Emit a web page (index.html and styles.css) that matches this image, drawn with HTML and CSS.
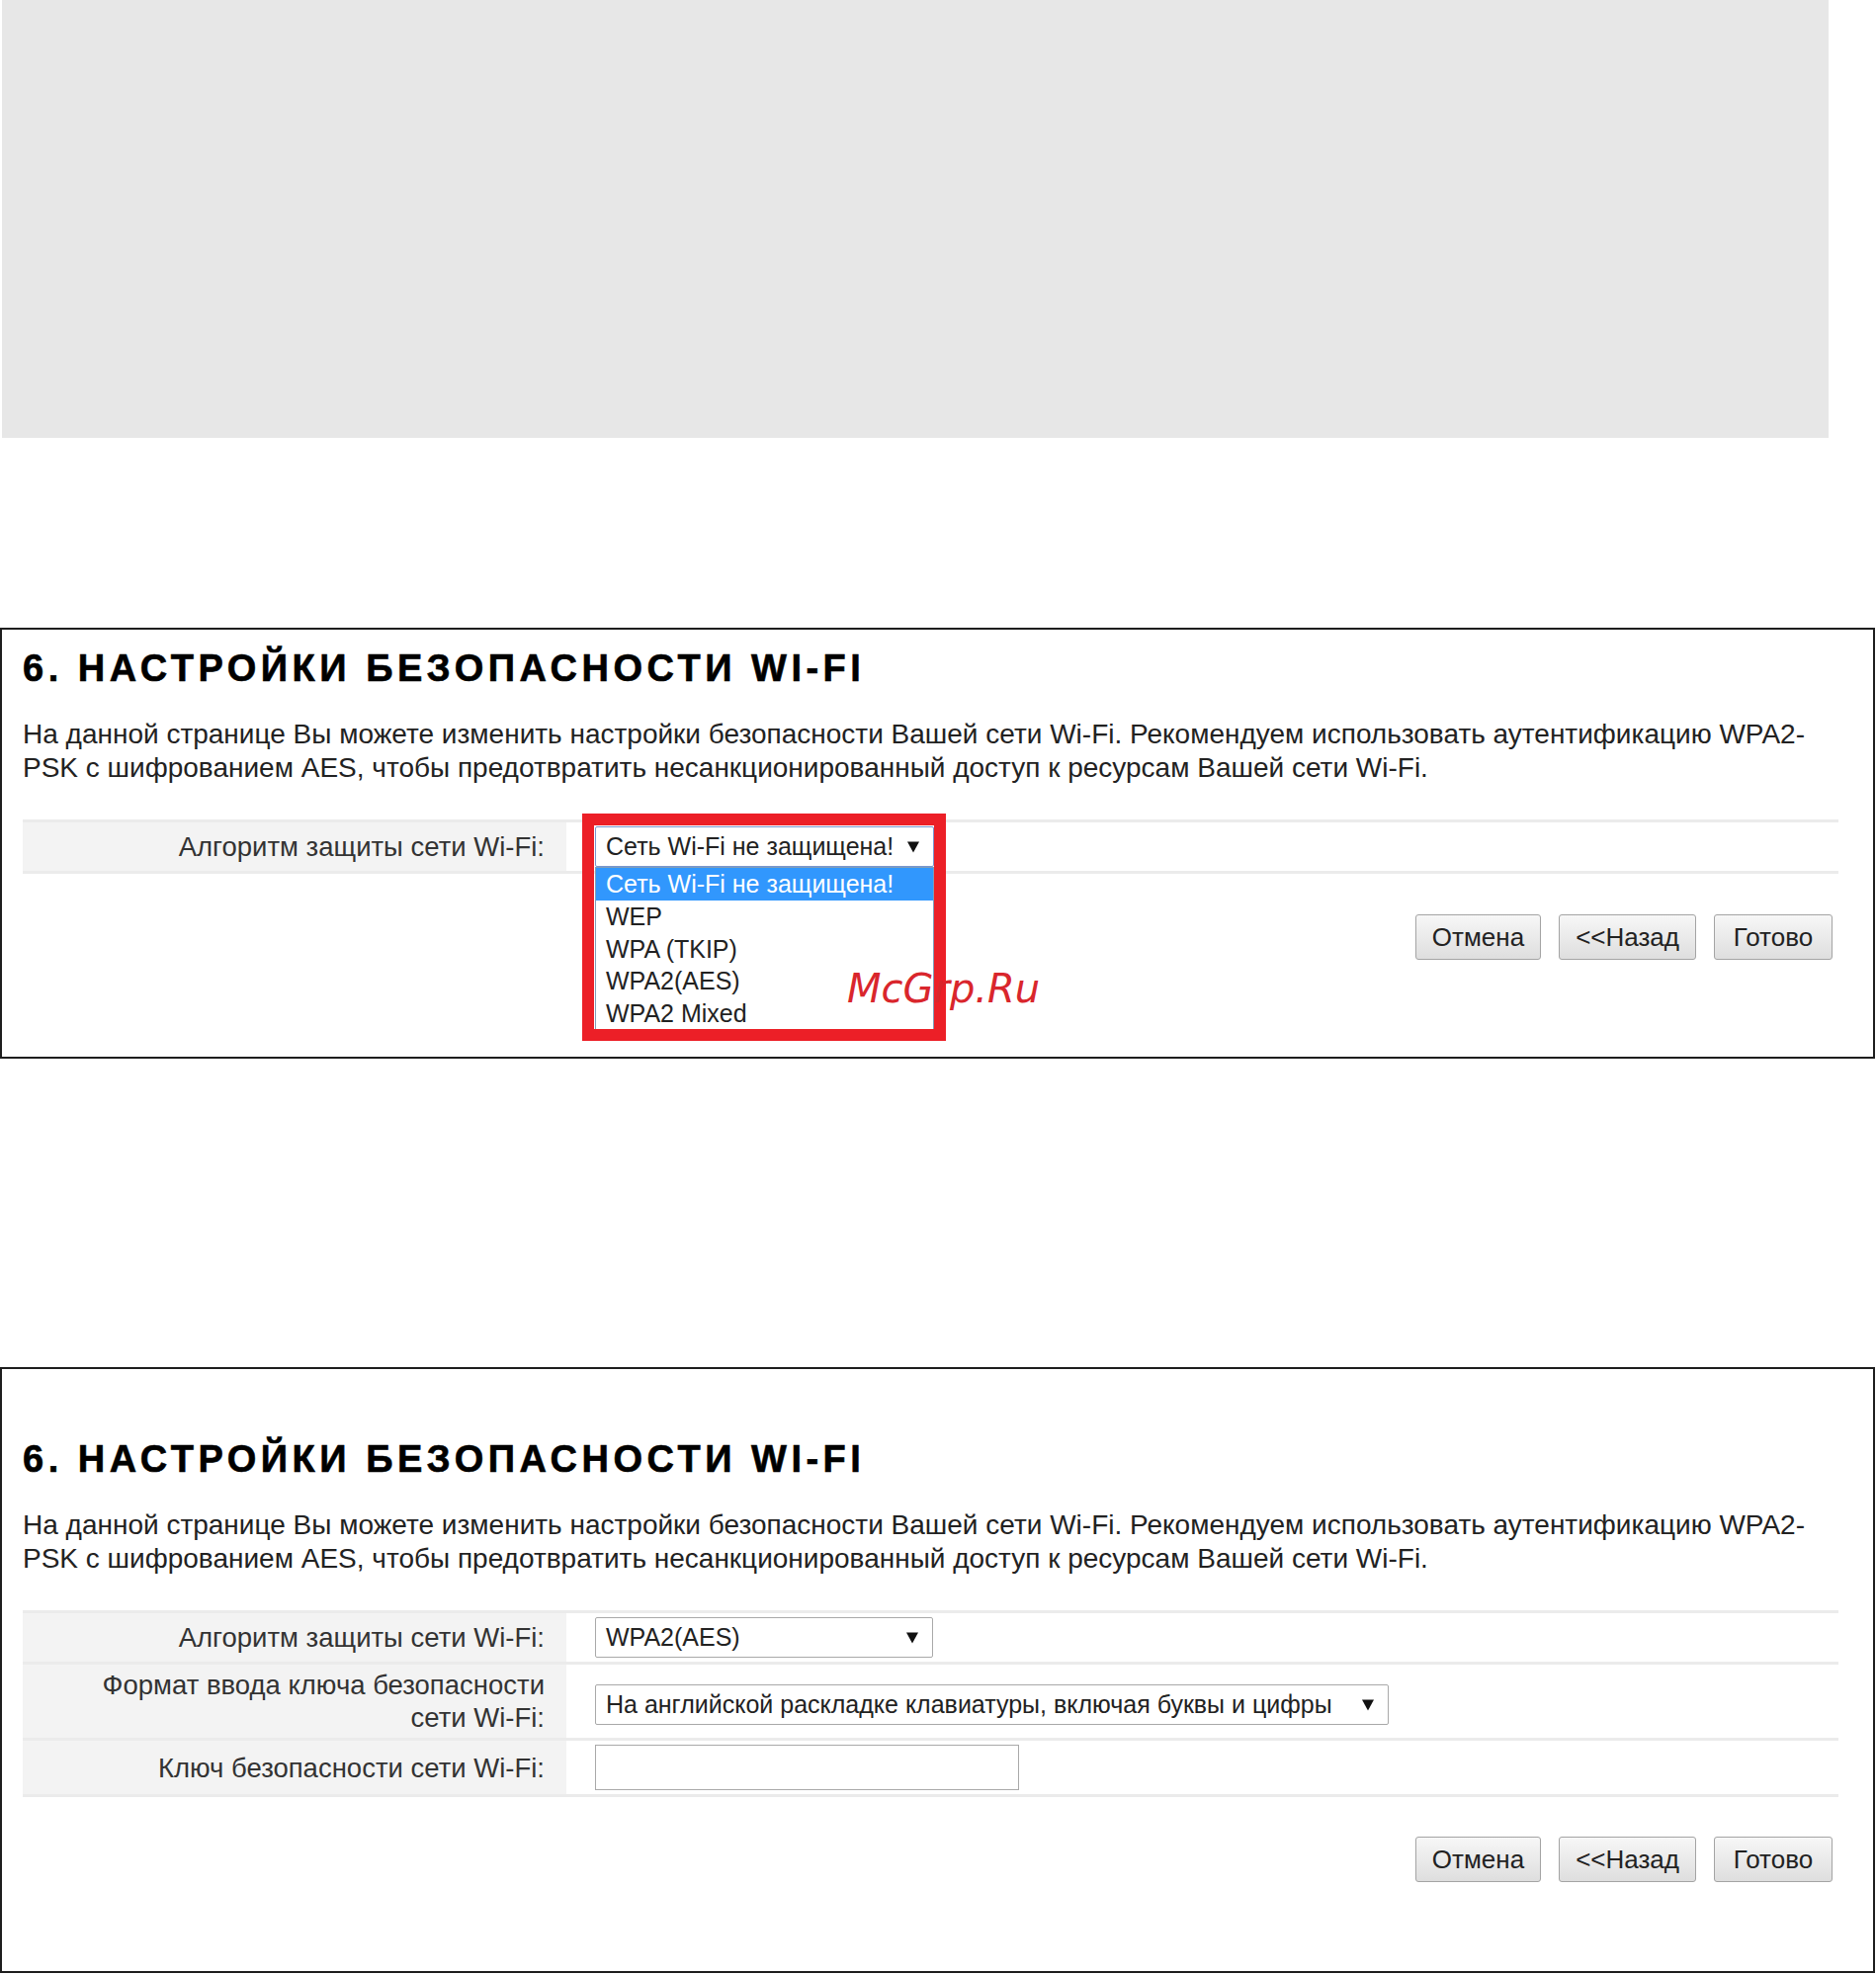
FILE: index.html
```html
<!DOCTYPE html>
<html lang="ru">
<head>
	<meta charset="UTF-8">
	<title>Настройки безопасности Wi-Fi</title>
	<link rel="stylesheet" href="styles.css">
</head>
<body>
	<div class="banner"></div>

	<div class="panel panel-open">
		<h2 class="panel-title">6. НАСТРОЙКИ БЕЗОПАСНОСТИ WI-FI</h2>
		<p class="panel-text">На данной странице Вы можете изменить настройки безопасности Вашей сети Wi-Fi. Рекомендуем использовать аутентификацию WPA2-PSK с шифрованием AES, чтобы предотвратить несанкционированный доступ к ресурсам Вашей сети Wi-Fi.</p>
		<div class="rows">
			<div class="row">
				<div class="label">Алгоритм защиты сети Wi-Fi:</div>
				<div class="value">
					<div class="dropdown">
						<div class="select select-focus select-short">
							<span>Сеть Wi-Fi не защищена!</span>
							<svg class="arrow" viewBox="0 0 12 12"><polygon points="0,1 12,1 6,12"/></svg>
						</div>
						<ul class="options">
							<li class="selected">Сеть Wi-Fi не защищена!</li>
							<li>WEP</li>
							<li>WPA (TKIP)</li>
							<li>WPA2(AES)</li>
							<li>WPA2 Mixed</li>
						</ul>
						<div class="frame"></div>
					</div>
				</div>
			</div>
		</div>
		<div class="buttons">
			<span class="btn">Отмена</span>
			<span class="btn">&lt;&lt;Назад</span>
			<span class="btn">Готово</span>
		</div>
		<div class="watermark">McGrp.Ru</div>
	</div>

	<div class="panel panel-filled">
		<h2 class="panel-title">6. НАСТРОЙКИ БЕЗОПАСНОСТИ WI-FI</h2>
		<p class="panel-text">На данной странице Вы можете изменить настройки безопасности Вашей сети Wi-Fi. Рекомендуем использовать аутентификацию WPA2-PSK с шифрованием AES, чтобы предотвратить несанкционированный доступ к ресурсам Вашей сети Wi-Fi.</p>
		<div class="rows">
			<div class="row">
				<div class="label">Алгоритм защиты сети Wi-Fi:</div>
				<div class="value">
					<div class="select select-short">
						<span>WPA2(AES)</span>
						<svg class="arrow" viewBox="0 0 12 12"><polygon points="0,1 12,1 6,12"/></svg>
					</div>
				</div>
			</div>
			<div class="row">
				<div class="label">Формат ввода ключа безопасности<br>сети Wi-Fi:</div>
				<div class="value">
					<div class="select select-long">
						<span>На английской раскладке клавиатуры, включая буквы и цифры</span>
						<svg class="arrow" viewBox="0 0 12 12"><polygon points="0,1 12,1 6,12"/></svg>
					</div>
				</div>
			</div>
			<div class="row">
				<div class="label">Ключ безопасности сети Wi-Fi:</div>
				<div class="value">
					<div class="input"></div>
				</div>
			</div>
		</div>
		<div class="buttons">
			<span class="btn">Отмена</span>
			<span class="btn">&lt;&lt;Назад</span>
			<span class="btn">Готово</span>
		</div>
	</div>
</body>
</html>
```

FILE: styles.css
```css
*{
	margin: 0;
	padding: 0;
	box-sizing: border-box;
}
body{
	font-family: "Liberation Sans", Arial, sans-serif;
	color: #222;
	background: #fff;
}
ul{
	list-style: none;
}
.banner{
	width: 1848px;
	height: 443px;
	margin-left: 2px;
	background: #e7e7e7;
}

/* panels */
.panel{
	position: relative;
	width: 1897px;
	border: 2px solid #1e1e1e;
	padding: 16px 35px 98px 21px;
}
.panel-open{
	margin-top: 192px;
}
.panel-filled{
	margin-top: 312px;
	padding-top: 68px;
	padding-bottom: 90px;
}
.panel-title{
	font-size: 38px;
	line-height: 46px;
	font-weight: bold;
	letter-spacing: 4.5px;
	color: #000;
	-webkit-text-stroke: 0.6px #000;
}
.panel-text{
	margin-top: 27px;
	font-size: 28px;
	line-height: 34px;
	color: #222;
}

/* form rows */
.rows{
	margin-top: 35px;
	border-top: 3px solid #ebebeb;
}
.row{
	display: flex;
	border-bottom: 3px solid #ebebeb;
}
.label{
	width: 550px;
	flex-shrink: 0;
	display: flex;
	align-items: center;
	justify-content: flex-end;
	text-align: right;
	padding: 4px 22px 4px 0;
	background: #f3f3f3;
	font-size: 27.5px;
	line-height: 33px;
	color: #333;
}
.value{
	flex: 1;
	display: flex;
	align-items: center;
	padding: 4px 0 4px 29px;
}

/* fake selects */
.select{
	display: flex;
	align-items: center;
	justify-content: space-between;
	height: 41px;
	padding: 0 14px 0 10px;
	border: 1px solid #a9a9a9;
	border-radius: 2px;
	background: #fff;
	font-size: 25px;
	color: #222;
}
.select-short{
	width: 342px;
}
.select-long{
	width: 803px;
	margin-top: 6px;
}
.select-focus{
	width: 343px;
	border-color: #7896cf;
}
.arrow{
	width: 12px;
	height: 13px;
	fill: #111;
}
.input{
	width: 429px;
	height: 46px;
	border: 1px solid #a9a9a9;
	background: #fff;
}

/* open dropdown */
.dropdown{
	position: relative;
}
.options{
	position: absolute;
	left: 0;
	top: 100%;
	width: 343px;
	border: 1px solid #7f9db9;
	background: #fff;
	font-size: 25px;
	color: #222;
	z-index: 2;
}
.options li{
	height: 32.8px;
	line-height: 33px;
	padding-left: 10px;
}
.options li.selected{
	background: #3197fd;
	color: #fff;
}
.frame{
	position: absolute;
	left: -13px;
	top: -13px;
	width: 368px;
	height: 230px;
	border: 12px solid #ec1f27;
	z-index: 3;
}

/* buttons */
.buttons{
	display: flex;
	justify-content: flex-end;
	gap: 18px;
	margin-top: 41px;
	padding-right: 6px;
}
.panel-filled .buttons{
	margin-top: 40px;
}
.btn{
	min-width: 120px;
	height: 46px;
	line-height: 44px;
	padding: 0 16px;
	text-align: center;
	border: 1px solid #a4a4a4;
	border-radius: 3px;
	background: linear-gradient(#f7f7f7, #dedede);
	font-size: 26px;
	color: #222;
}

.watermark{
	position: absolute;
	left: 855px;
	top: 341px;
	font-family: "DejaVu Sans", sans-serif;
	font-style: italic;
	font-size: 40px;
	line-height: 45px;
	color: #d9262c;
	z-index: 4;
}
```
